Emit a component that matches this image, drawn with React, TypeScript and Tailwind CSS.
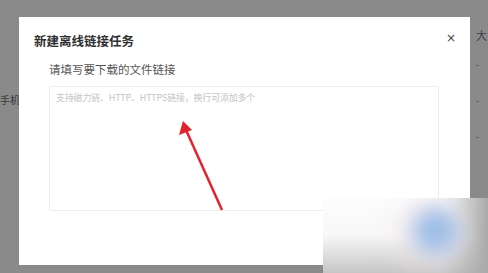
import React from 'react';

const font = { fontFamily: '"Noto Sans CJK SC", "Noto Sans", sans-serif' };

export default function App() {
  return (
    <div className="relative w-[488px] h-[273px] overflow-hidden bg-[#8a8a8a]" style={font}>
      {/* page behind the overlay */}
      <div className="flex h-full justify-between">
        <div className="pt-[93px] text-[10px] leading-[14px] text-[#3a3a3a] whitespace-nowrap">手机备</div>
        <div className="flex flex-col pt-[29px] w-[12px] text-[#3f3f3f]">
          <span className="text-[11px] leading-[13px]">大</span>
          <span className="mt-[18px] text-[9px] leading-[10px]">-</span>
          <span className="mt-[26px] text-[9px] leading-[10px]">-</span>
          <span className="mt-[26px] text-[9px] leading-[10px]">-</span>
        </div>
      </div>

      {/* dialog */}
      <div className="absolute left-[19px] top-[17px] w-[451px] h-[248px] bg-white">
        <div className="flex items-start justify-between pl-[15px] pr-[14px] pt-[14px]">
          <h2 className="text-[12.5px] leading-[19px] font-bold text-[#2f2f2f]">新建离线链接任务</h2>
          <button className="text-[12px] leading-[14px] text-[#444]" style={{ fontFamily: '"DejaVu Sans", sans-serif' }}>×</button>
        </div>
        <div className="pl-[30px] pr-[31px] pt-[11px]">
          <div className="text-[11.5px] leading-[17px] text-[#555]">请填写要下载的文件链接</div>
          <div className="mt-[8px] h-[125px] border border-[#ececec] rounded-[2px] px-[6px] pt-[5px]">
            <div className="text-[9px] leading-[12px] text-[#c4c4c4] tracking-[-0.2px]">支持磁力链、HTTP、HTTPS链接，换行可添加多个</div>
          </div>
        </div>
      </div>

      {/* red annotation arrow */}
      <svg className="absolute left-0 top-0" width="488" height="273">
        <line x1="222" y1="210" x2="186" y2="130" stroke="#e4222c" strokeWidth="2.5" />
        <polygon points="183,121 179,135 192,130" fill="#e4222c" />
      </svg>

      {/* blurred watermark */}
      <div className="absolute left-[323px] top-[198px] w-[165px] h-[75px] overflow-hidden bg-[linear-gradient(180deg,#fdfdfd_0%,#f7f7f7_50%,#c6c6c6_100%)]">
        <div className="absolute inset-0 bg-[linear-gradient(90deg,transparent_0%,transparent_72%,#a9a9a9_100%)]" />
        <div className="absolute left-[72px] top-[-4px] w-[66px] h-[76px] rounded-full bg-[#f0e2e6] opacity-50 blur-[12px]" />
        <div className="absolute left-[90px] top-[10px] w-[46px] h-[46px] rounded-full bg-[#9dbde6] blur-[10px]" />
      </div>
    </div>
  );
}
